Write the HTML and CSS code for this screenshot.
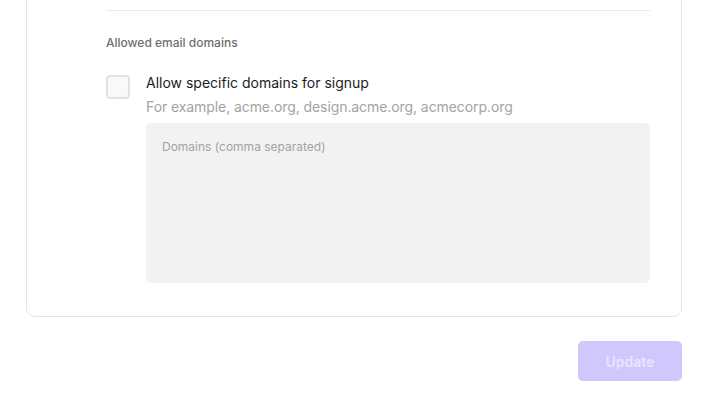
FILE: index.html
```html
<!DOCTYPE html>
<html lang="en">
<head>
<meta charset="utf-8">
<title>Allowed email domains</title>
<link rel="stylesheet" href="styles.css">
</head>
<body>
<div class="page">
  <section class="card">
    <div class="divider"></div>
    <h3 class="section-label">Allowed email domains</h3>
    <div class="option">
      <span class="checkbox" role="checkbox" aria-checked="false"></span>
      <div class="option-body">
        <div class="option-title">Allow specific domains for signup</div>
        <div class="option-desc">For example, acme.org, design.acme.org, acmecorp.org</div>
        <textarea class="domains" placeholder="Domains (comma separated)" disabled></textarea>
      </div>
    </div>
  </section>
  <div class="actions">
    <button class="btn-update" disabled>Update</button>
  </div>
</div>
</body>
</html>
```
FILE: styles.css
```css
* { box-sizing: border-box; }
html, body {
  margin: 0;
  padding: 0;
  background: #ffffff;
  font-family: Inter, "Noto Sans", sans-serif;
  overflow: hidden;
}
.page {
  padding: 0 39px 0 26px;
}
.card {
  margin-top: -41px;
  border: 1px solid #e5e5e5;
  border-radius: 9px;
  padding: 50px 31px 33px 79px;
}
.divider {
  height: 1px;
  background: #ececec;
}
.section-label {
  margin: 24px 0 0;
  font-size: 12px;
  line-height: 16px;
  font-weight: 500;
  color: #6f6f6f;
}
.option {
  display: flex;
  align-items: flex-start;
  gap: 16px;
  margin-top: 22px;
}
.checkbox {
  flex: none;
  width: 24px;
  height: 24px;
  margin-top: 2px;
  border: 2px solid #e2e2e2;
  border-radius: 4px;
  background: #f9f9f9;
}
.option-body {
  flex: 1;
  display: flex;
  flex-direction: column;
}
.option-title {
  font-size: 14px;
  line-height: 20px;
  color: #1c1c1c;
}
.option-desc {
  margin-top: 4px;
  font-size: 14px;
  line-height: 20px;
  letter-spacing: -0.08px;
  color: #a3a3a3;
}
.domains {
  display: block;
  margin-top: 6px;
  width: 100%;
  height: 160px;
  border: none;
  border-radius: 5px;
  background: #f2f2f2;
  padding: 16px 16px;
  font-family: inherit;
  font-size: 12px;
  line-height: 16px;
  resize: none;
  outline: none;
}
.domains::placeholder {
  color: #a3a3a3;
}
.actions {
  display: flex;
  justify-content: flex-end;
  margin-top: 24px;
}
.btn-update {
  width: 104px;
  height: 40px;
  border: none;
  border-radius: 5px;
  background: #d0c8fd;
  color: #e9e5fe;
  font-family: inherit;
  font-size: 14px;
  font-weight: 600;
}
```
